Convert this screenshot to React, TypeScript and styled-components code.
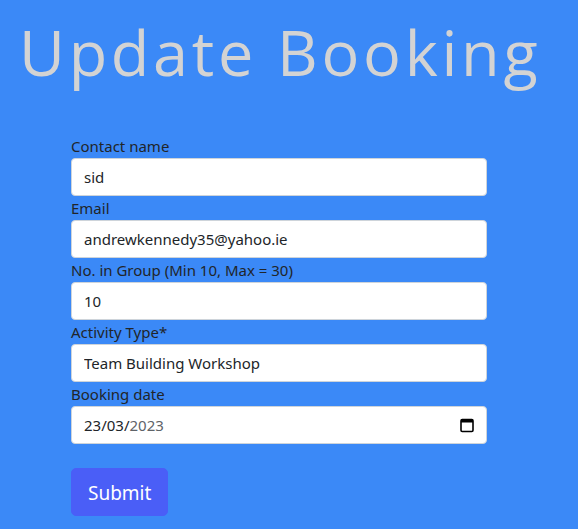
import React from "react";
import styled, { createGlobalStyle } from "styled-components";

const Global = createGlobalStyle`
  html, body { margin: 0; padding: 0; }
  body {
    background: #3b89f7;
    font-family: "Noto Sans", "Open Sans", sans-serif;
    color: #212529;
  }
`;

const Page = styled.div`
  min-height: 529px;
  background: #3b89f7;
  padding: 12px 0 0 19px;
  box-sizing: border-box;
`;

const Title = styled.h1`
  margin: 0;
  font-family: "Open Sans", sans-serif;
  font-weight: 400;
  font-size: 63px;
  line-height: 80px;
  letter-spacing: 3.7px;
  color: #d3d3d3;
`;

const Form = styled.form`
  width: 416px;
  margin: 42px 0 0 52px;
  display: flex;
  flex-direction: column;
`;

const Label = styled.label`
  display: block;
  font-size: 15px;
  line-height: 24px;
  color: #212529;
`;

const Input = styled.input`
  display: block;
  width: 100%;
  box-sizing: border-box;
  height: 38px;
  padding: 6px 12px;
  font-family: inherit;
  font-size: 15px;
  color: #212529;
  background: #fff;
  border: 1px solid #ced4da;
  border-radius: 4px;
  outline: none;
`;

const DateBox = styled.div`
  display: flex;
  align-items: center;
  justify-content: space-between;
  height: 38px;
  box-sizing: border-box;
  padding: 6px 12px;
  font-size: 15px;
  background: #fff;
  border: 1px solid #ced4da;
  border-radius: 4px;
`;

const DateText = styled.span`
  color: #212529;
`;

const Year = styled.span`
  color: #5f6368;
`;

const Submit = styled.button`
  align-self: flex-start;
  margin-top: 24px;
  height: 48px;
  padding: 2px 16px 0;
  font-family: inherit;
  font-size: 19px;
  color: #fff;
  background: #4a5ef7;
  border: 1px solid #4a5ef7;
  border-radius: 5px;
`;

const CalendarIcon = () => (
  <svg width="14" height="16" viewBox="0 0 14 16" aria-hidden="true">
    <rect x="1" y="2.5" width="12" height="12" rx="1.2" fill="none" stroke="#000" strokeWidth="1.6" />
    <rect x="1" y="2.5" width="12" height="3" fill="#000" />
  </svg>
);

export default function App() {
  return (
    <>
      <Global />
      <Page>
        <Title>Update Booking</Title>
        <Form onSubmit={(e) => e.preventDefault()}>
          <Label>Contact name</Label>
          <Input defaultValue="sid" />
          <Label>Email</Label>
          <Input defaultValue="andrewkennedy35@yahoo.ie" />
          <Label>No. in Group (Min 10, Max = 30)</Label>
          <Input defaultValue="10" />
          <Label>Activity Type*</Label>
          <Input defaultValue="Team Building Workshop" />
          <Label>Booking date</Label>
          <DateBox>
            <DateText>
              23/03/<Year>2023</Year>
            </DateText>
            <CalendarIcon />
          </DateBox>
          <Submit type="submit">Submit</Submit>
        </Form>
      </Page>
    </>
  );
}
